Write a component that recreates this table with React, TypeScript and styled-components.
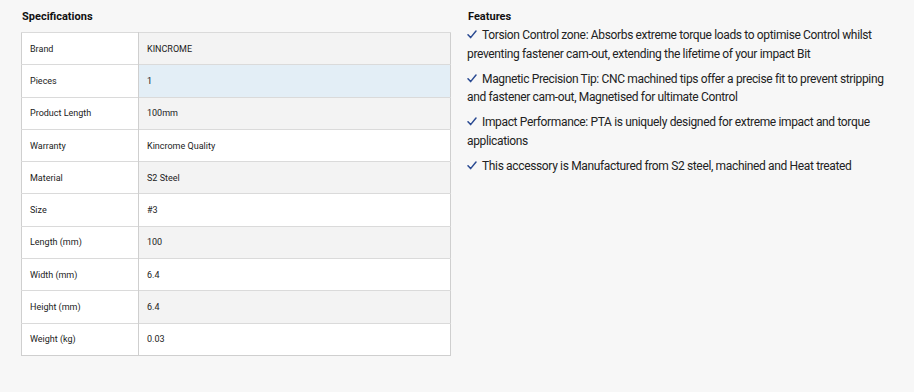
import styled, { createGlobalStyle } from 'styled-components'

const GlobalStyle = createGlobalStyle`
	body {
		margin: 0;
		background: #f7f7f7;
		font-family: Roboto, 'Liberation Sans', sans-serif;
		color: #222;
	}
`

const Page = styled.div`
	display: flex;
	gap: 16px;
	padding: 8px 0 0 21px;
`

const Column = styled.section<{ $width: number }>`
	width: ${p => p.$width}px;
	flex-shrink: 0;
`

const Title = styled.h3`
	margin: 0 0 7px 1px;
	font-size: 11px;
	font-weight: bold;
	line-height: 17px;
	color: #111;
`

const SpecTable = styled.table`
	width: 100%;
	border-collapse: collapse;
	border: 1px solid #cfcfcf;
	font-size: 9px;
	td {
		height: 31.3px;
		padding: 0 8px;
		border-top: 1px solid #dadada;
		vertical-align: middle;
	}
	td:first-child {
		width: 100px;
		background: #fff;
		border-right: 1px solid #cfcfcf;
		color: #222;
	}
`

const ValueCell = styled.td<{ $tone: 'grey' | 'white' | 'blue' }>`
	background: ${p => (p.$tone === 'grey' ? '#f3f3f3' : p.$tone === 'blue' ? '#e3eef6' : '#fff')};
`

const FeatureList = styled.ul`
	list-style: none;
	margin: 0;
	padding: 0;
	display: flex;
	flex-direction: column;
	gap: 6.5px;
	margin-top: -6px;
`

const Feature = styled.li`
	font-size: 12px;
	letter-spacing: -0.35px;
	line-height: 18.5px;
	color: #222;
`

const Tick = () => (
	<svg width="10" height="9" viewBox="0 0 10 9" style={{ marginRight: 5, verticalAlign: '0px' }}>
		<path d="M1 4.8 L3.6 7.6 L9 1" fill="none" stroke="#2a4a92" strokeWidth="1.5" strokeLinecap="round" strokeLinejoin="round" />
	</svg>
)

const specs: [string, string][] = [
	['Brand', 'KINCROME'],
	['Pieces', '1'],
	['Product Length', '100mm'],
	['Warranty', 'Kincrome Quality'],
	['Material', 'S2 Steel'],
	['Size', '#3'],
	['Length (mm)', '100'],
	['Width (mm)', '6.4'],
	['Height (mm)', '6.4'],
	['Weight (kg)', '0.03'],
]

const features = [
	'Torsion Control zone: Absorbs extreme torque loads to optimise Control whilst preventing fastener cam-out, extending the lifetime of your impact Bit',
	'Magnetic Precision Tip: CNC machined tips offer a precise fit to prevent stripping and fastener cam-out, Magnetised for ultimate Control',
	'Impact Performance: PTA is uniquely designed for extreme impact and torque applications',
	'This accessory is Manufactured from S2 steel, machined and Heat treated',
]

const App = () => (
	<>
		<GlobalStyle />
		<Page>
			<Column $width={430}>
				<Title>Specifications</Title>
				<SpecTable>
					<tbody>
						{specs.map(([label, value], index) => (
							<tr key={label}>
								<td>{label}</td>
								<ValueCell $tone={index === 1 ? 'blue' : index % 2 === 0 ? 'grey' : 'white'}>{value}</ValueCell>
							</tr>
						))}
					</tbody>
				</SpecTable>
			</Column>
			<Column $width={424}>
				<Title>Features</Title>
				<FeatureList>
					{features.map(text => (
						<Feature key={text}>
							<Tick />
							{text}
						</Feature>
					))}
				</FeatureList>
			</Column>
		</Page>
	</>
)

export default App
